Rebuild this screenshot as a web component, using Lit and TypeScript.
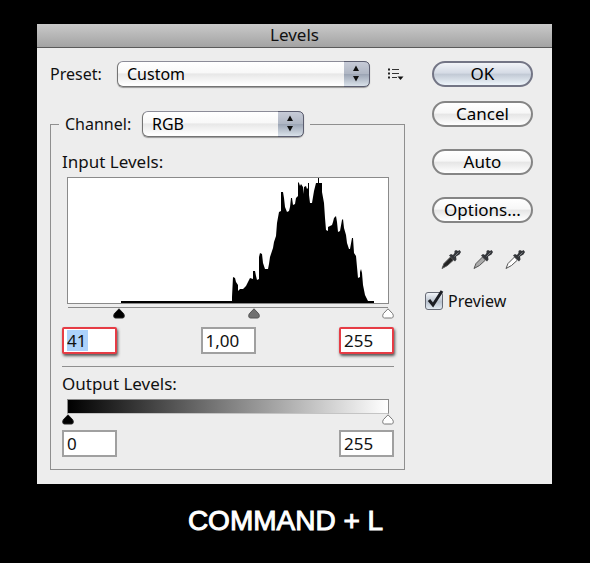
import { LitElement, html, css, svg } from "lit";
import { customElement, property } from "lit/decorators.js";

const thumb = (fill: string, stroke: string) =>
  `url("data:image/svg+xml,${encodeURIComponent(
    `<svg xmlns="http://www.w3.org/2000/svg" viewBox="0 0 12 11"><path d="M6 .8 10.6 5.6Q11.8 7.4 11 9.2 10.6 10 9.6 10H2.4Q1.4 10 1 9.2 .2 7.4 1.4 5.6Z" fill="${fill}" stroke="${stroke}" stroke-width="1"/></svg>`
  )}")`;

const HISTOGRAM =
  "121,303 121,301 232,301 232,297 233,277 235,278 236,282 238,285 238,291 240,289 243,289 246,286 248,282 250,278 253,279 253,271 255,271 256,276 257,280 259,279 259,257 260,253 262,254 263,263 265,269 268,269 269,264 270,257 273,248 274,242 276,236 277,223 279,212 281,211 281,192 283,192 284,198 285,207 287,212 289,211 290,207 291,198 292,198 293,205 295,204 296,198 298,196 298,182 299,183 300,186 301,184 303,187 304,194 304,187 306,186 307,189 308,188 308,183 309,183 309,195 310,203 312,203 313,197 314,191 316,183 318,183 318,178 319,178 319,183 322,183 322,192 324,203 325,218 326,230 328,231 328,227 332,225 333,222 334,218 336,216 337,222 338,232 340,231 342,220 343,219 344,228 346,235 347,243 349,249 350,249 352,238 353,238 354,253 356,256 357,267 358,278 360,277 360,272 361,269 362,273 363,285 365,295 368,301 374,301 374,303";

@customElement("level-select")
export class LevelSelect extends LitElement {
  @property() value = "";
  @property() label = "";

  static styles = css`
    :host { display: grid; }
    .select, .arrows { grid-area: 1 / 1; }
    .select {
      appearance: none;
      box-sizing: border-box;
      width: 100%;
      height: 26px;
      margin: 0;
      padding: 0 30px 0 9px;
      border: 1px solid #747474;
      border-top-color: #8c8c98;
      border-radius: 6px;
      background: linear-gradient(#fff 0%, #f8f8f8 45%, #e7e7e7 50%, #fff 95%);
      box-shadow: 0 1px 1px #999;
      color: #000;
      font: 16px/22px "Noto Sans", "Open Sans", sans-serif;
    }
    .arrows {
      justify-self: end;
      width: 26px;
      height: 26px;
      pointer-events: none;
    }
  `;

  render() {
    return html`
      <select class="select" aria-label=${this.label}>
        <option>${this.value}</option>
      </select>
      <svg class="arrows" viewBox="0 0 26 26" aria-hidden="true">
        <defs>
          <linearGradient id="g" x1="0" y1="0" x2="0" y2="1">
            <stop offset="0" stop-color="#c8ccd8" />
            <stop offset=".48" stop-color="#b0b7c4" />
            <stop offset=".52" stop-color="#9da6b5" />
            <stop offset="1" stop-color="#dce4ec" />
          </linearGradient>
        </defs>
        <path d="M0 .5H20Q25.500 .5 25.500 6V20Q25.500 25.500 20 25.500H0Z" fill="url(#g)" />
        <path d="M0 .5H20Q25.500 .5 25.500 6V20Q25.500 25.500 20 25.500H0" fill="none" stroke="#5c5e70" />
        <path d="M12 4.500 15 10H9ZM12 20.500 15 15H9Z" fill="#111" />
      </svg>
    `;
  }
}

@customElement("app-root")
export class AppRoot extends LitElement {
  static styles = css`
    :host {
      display: block;
      box-sizing: border-box;
      min-height: 100vh;
      padding: 24px 38px 16px 37px;
      background: #000;
      color: #111;
      font: 16px/20px "Noto Sans", "Open Sans", sans-serif;
    }
    .dialog { background: #ededed; }
    .title {
      height: 23px;
      margin: 0;
      border-bottom: 1px solid #5a5a5a;
      background: linear-gradient(#c9c9c9, #a3a3a3);
      font-size: 17px;
      font-weight: 400;
      line-height: 22px;
      text-align: center;
    }
    .body {
      display: flex;
      gap: 20px;
      padding: 13px 19px 14px 13px;
    }
    .main { flex: 1; min-width: 0; }
    .preset {
      display: grid;
      grid-template-columns: 67px 1fr 35px;
      align-items: center;
    }
    .menu {
      display: flex;
      justify-content: flex-end;
      padding: 0;
      border: 0;
      background: none;
    }
    .menu-icon { width: 18px; height: 16px; }
    .group {
      min-width: 0;
      margin: 24px 0 0;
      padding: 0 10px 12px 11px;
      border: 1px solid #8f8f8f;
    }
    .channel { margin-left: -3px; padding: 0 6px; }
    .channel-row {
      display: grid;
      grid-template-columns: 77px 162px;
      align-items: center;
    }
    .caption { display: block; margin-top: 15px; font-size: 17px; }
    .plot {
      display: block;
      box-sizing: border-box;
      width: calc(100% - 10px);
      height: 127px;
      margin: 5px 5px 3px;
      border: 1px solid #8a8a8a;
      background: #fff;
    }
    .track {
      height: 1px;
      margin: 0 6px;
      background: #8a8a8a;
    }
    .sliders { display: grid; height: 11px; }
    .slider {
      grid-area: 1 / 1;
      appearance: none;
      width: 100%;
      height: 11px;
      margin: 0;
      background: none;
      pointer-events: none;
    }
    .slider::-webkit-slider-thumb {
      appearance: none;
      width: 12px;
      height: 11px;
      border: 0;
      pointer-events: auto;
    }
    .fields { display: flex; justify-content: space-between; }
    .fields.input { margin-top: 8px; }
    .fields.output { margin-top: 5px; }
    .field {
      box-sizing: border-box;
      width: 55px;
      height: 27px;
      margin: 0;
      padding: 0 3px;
      border: 2px solid #a0a0a0;
      border-radius: 0;
      background-color: #fff;
      color: #111;
      font: 17px/20px "Noto Sans", "Open Sans", sans-serif;
    }
    .field.marked {
      border-color: #e63c45;
      border-radius: 2px;
      box-shadow: 1px 2px 3px #555;
    }
    .field.selected {
      background: linear-gradient(#add2fb, #add2fb) 3px 1px / 21px 21px no-repeat #fff;
    }
    .rule {
      height: 1px;
      margin: 12px 0 0;
      border: 0;
      background: #8f8f8f;
    }
    .caption.out { margin-top: 7px; }
    .ramp {
      height: 13px;
      margin: 5px 5px 0;
      border: 1px solid #8a8a8a;
      border-bottom-color: #c4c4c4;
      background: linear-gradient(90deg, #000, #fff);
    }
    .side {
      display: flex;
      flex-direction: column;
      width: 108px;
    }
    .button {
      height: 26px;
      margin: 0 0 0 7px;
      padding: 0;
      border: 2px solid #858585;
      border-radius: 13px;
      background: linear-gradient(#fff 0%, #f7f7f7 45%, #e6e6e6 52%, #fff 100%);
      color: #000;
      font: 17px/20px "Noto Sans", "Open Sans", sans-serif;
    }
    .button.primary {
      border-color: #737585;
      background: linear-gradient(#f2f4f8 0%, #d5dbe5 45%, #c2cad5 52%, #eef5fb 100%);
    }
    .button.cancel { margin-top: 14px; }
    .button.spaced { margin-top: 22px; }
    .droppers {
      display: flex;
      justify-content: space-between;
      margin: 25px 7px 0 15px;
    }
    .dropper {
      display: block;
      padding: 0;
      border: 0;
      background: none;
    }
    .dropper-icon { display: block; width: 22px; height: 22px; }
    .preview {
      display: flex;
      align-items: center;
      gap: 5px;
      margin-top: 21px;
    }
    .tick { display: grid; }
    .check, .mark { grid-area: 1 / 1; }
    .check {
      appearance: none;
      box-sizing: border-box;
      width: 18px;
      height: 18px;
      margin: 0;
      border: 1px solid #666a75;
      border-radius: 3px;
      background: linear-gradient(#f2f5f9, #b9c2ce 55%, #e2eaf2);
    }
    .mark {
      width: 18px;
      height: 18px;
      overflow: visible;
      pointer-events: none;
      visibility: hidden;
    }
    .check:checked + .mark { visibility: visible; }
    .shortcut {
      margin: 21px 18px 0 0;
      color: #fff;
      font: 28px/32px "Liberation Sans", Arial, sans-serif;
      -webkit-text-stroke: 1px #fff;
      text-align: center;
    }
  `;

  private slider(label: string, value: number, kind: string) {
    return html`<input class="slider ${kind}" type="range" min="0" max="255" .value=${String(value)} aria-label=${label} />`;
  }

  private dropper(label: string, fill: string) {
    return html`<button class="dropper" aria-label=${label}>
      <svg class="dropper-icon" viewBox="0 0 22 22" aria-hidden="true">
        ${svg`
          <path d="M2 20.500 4 15.500 10.500 9 13.500 12 7.500 17.500Z" fill=${fill} stroke="#555" stroke-width="1" stroke-linejoin="round" />
          <path d="M9 7.500 11 6 13 7 14.500 5 14.500 3 16 2 18 3 19.500 2 21 4 19.500 6.500 16 8.500 16.500 11.500 15 13.500Z" fill="#34363a" />
          <path d="M14.500 8.500 18.500 4.500" stroke="#7c7f84" stroke-width="1" />
        `}
      </svg>
    </button>`;
  }

  render() {
    return html`
      <style>
        .slider.black::-webkit-slider-thumb { background: ${thumb("#000", "#222")} center / 12px 11px no-repeat; }
        .slider.gray::-webkit-slider-thumb { background: ${thumb("#707070", "#555")} center / 12px 11px no-repeat; }
        .slider.white::-webkit-slider-thumb { background: ${thumb("#fff", "#777")} center / 12px 11px no-repeat; }
      </style>
      <section class="dialog">
        <h1 class="title">Levels</h1>
        <div class="body">
          <div class="main">
            <div class="preset">
              <span>Preset:</span>
              <level-select label="Preset" value="Custom"></level-select>
              <button class="menu" aria-label="Preset options">
                <svg class="menu-icon" viewBox="0 0 18 16" aria-hidden="true">
                  <path d="M1 3.500h2M1 7.500h2M1 11.500h2" stroke="#222" stroke-width="2" />
                  <path d="M5 3.500h7M5 7.500h7M5 11.500h5" stroke="#333" stroke-width="1" />
                  <path d="M10.500 10.500h6L13.500 14Z" fill="#111" />
                </svg>
              </button>
            </div>
            <fieldset class="group">
              <legend class="channel">
                <div class="channel-row">
                  <span>Channel:</span>
                  <level-select label="Channel" value="RGB"></level-select>
                </div>
              </legend>
              <span class="caption">Input Levels:</span>
              <svg class="plot" viewBox="68 178 320 125" preserveAspectRatio="none" role="img" aria-label="Histogram">
                <polygon points=${HISTOGRAM} fill="#000" />
              </svg>
              <div class="track"></div>
              <div class="sliders">
                ${this.slider("Shadow input", 41, "black")}
                ${this.slider("Midtone input", 148, "gray")}
                ${this.slider("Highlight input", 255, "white")}
              </div>
              <div class="fields input">
                <input class="field marked selected" aria-label="Shadow input level" value="41" />
                <input class="field" aria-label="Midtone input level" value="1,00" />
                <input class="field marked" aria-label="Highlight input level" value="255" />
              </div>
              <hr class="rule" />
              <span class="caption out">Output Levels:</span>
              <div class="ramp"></div>
              <div class="sliders">
                ${this.slider("Shadow output", 0, "black")}
                ${this.slider("Highlight output", 255, "white")}
              </div>
              <div class="fields output">
                <input class="field" aria-label="Shadow output level" value="0" />
                <input class="field" aria-label="Highlight output level" value="255" />
              </div>
            </fieldset>
          </div>
          <div class="side">
            <button class="button primary">OK</button>
            <button class="button cancel">Cancel</button>
            <button class="button spaced">Auto</button>
            <button class="button spaced">Options...</button>
            <div class="droppers">
              ${this.dropper("Set black point", "#222")}
              ${this.dropper("Set gray point", "#aaa")}
              ${this.dropper("Set white point", "#fff")}
            </div>
            <label class="preview">
              <span class="tick">
                <input class="check" type="checkbox" checked />
                <svg class="mark" viewBox="0 0 18 18" aria-hidden="true">
                  <path d="M4 8 8 13 17 -1" fill="none" stroke="#1c1e24" stroke-width="3" />
                </svg>
              </span>
              Preview
            </label>
          </div>
        </div>
      </section>
      <p class="shortcut">COMMAND + L</p>
    `;
  }
}
